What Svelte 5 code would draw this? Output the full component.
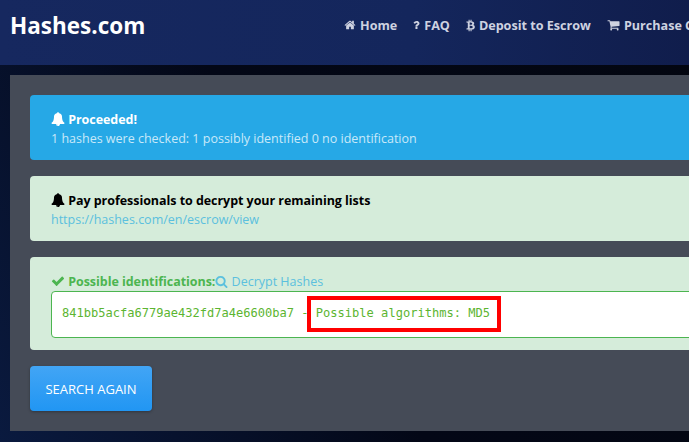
<script lang="ts">
	const paths = {
		home: 'M1472 992v480q0 26-19 45t-45 19h-384v-384h-256v384h-384q-26 0-45-19t-19-45v-480q0-1 .5-3t.5-3l575-474 575 474q1 2 1 6zm223-69l-62 74q-8 9-21 11h-3q-13 0-21-7l-692-577-692 577q-12 8-24 7-13-2-21-11l-62-74q-8-10-7-23.5t11-21.5l719-599q32-26 76-26t76 26l244 204v-195q0-14 9-23t23-9h192q14 0 23 9t9 23v408l219 182q10 8 11 21.5t-7 23.5z',
		question: 'M704 1256v240q0 16-12 28t-28 12h-240q-16 0-28-12t-12-28v-240q0-16 12-28t28-12h240q16 0 28 12t12 28zm316-600q0 54-15.5 101t-35 76.5-55 59.5-57.5 43.5-61 35.5q-41 23-68.5 65t-27.5 67q0 17-12 32.5t-28 15.5h-240q-15 0-25.5-18.5t-10.5-37.5v-45q0-83 65-156.5t143-108.5q59-27 84-56t25-76q0-42-46.5-74t-107.5-32q-65 0-108 29-35 25-107 115-13 16-31 16-12 0-25-8l-164-125q-13-10-15.5-25t5.5-28q160-266 464-266 80 0 161 31t146 83 106 127.5 41 158.5z',
		bitcoin: 'M1167 640q18 182-131 258 117 28 175 103t45 214q-7 71-32.5 125t-64.5 89-97 58.5-121.5 34.5-145.5 20v255h-154v-251q-80 0-122-1v252h-154v-255q-18 0-54-.5t-55-.5h-200l31-183h111q50 0 58-51v-402h16q-6-1-16-1v-287q-13-68-89-68h-111v-164l212 1q64 0 97-1v-252h154v247q82-2 122-2v-245h154v252q79 7 140 22.5t113 45 82.5 78 36.5 114.5zm-215 545q0-36-15-64t-37-46-57.5-30.5-65.5-18.5-74-9-69-3-64.5 1-47.5 1v338q8 0 37 .5t48 .5 53-1.5 58.5-4 57-8.5 55.5-14 47.5-21 39.5-30 24.5-40 9.5-51zm-71-476q0-33-12.5-58.5t-30.5-42-48-28-55-16.5-61.5-8-58-2.5-54 1-39.5.5v307q5 0 34.5.5t46.5 0 50-2 55-5.5 51.5-11 48.5-18.5 37-27 27-38.5 9-51z',
		cart: 'M704 1536q0 52-38 90t-90 38-90-38-38-90 38-90 90-38 90 38 38 90zm896 0q0 52-38 90t-90 38-90-38-38-90 38-90 90-38 90 38 38 90zm128-1088v512q0 24-16.5 42.5t-40.5 21.5l-1044 122q13 60 13 70 0 16-24 64h920q26 0 45 19t19 45-19 45-45 19h-1024q-26 0-45-19t-19-45q0-11 8-31.5t16-36 21.5-40 15.5-29.5l-177-823h-204q-26 0-45-19t-19-45 19-45 45-19h256q16 0 28.5 6.5t19.5 15.5 13 24.5 8 26 5.5 29.5 4.5 26h1201q26 0 45 19t19 45z',
		bell: 'M912 1696q0-16-16-16-59 0-101.5-42.5t-42.5-101.5q0-16-16-16t-16 16q0 73 51.5 124.5t124.5 51.5q16 0 16-16zm816-288q0 52-38 90t-90 38h-448q0 106-75 181t-181 75-181-75-75-181h-448q-52 0-90-38t-38-90q50-42 91-88t85-119.5 74.5-158.5 50-206 19.5-260q0-152 117-282.5t307-158.5q-8-19-8-39 0-40 28-68t68-28 68 28 28 68q0 20-8 39 190 28 307 158.5t117 282.5q0 139 19.5 260t50 206 74.5 158.5 85 119.5 91 88z',
		check: 'M1671 566q0 40-28 68l-724 724-136 136q-28 28-68 28t-68-28l-136-136-362-362q-28-28-28-68t28-68l136-136q28-28 68-28t68 28l294 295 656-657q28-28 68-28t68 28l136 136q28 28 28 68z',
		search: 'M1216 832q0-185-131.5-316.5t-316.5-131.5-316.5 131.5-131.5 316.5 131.5 316.5 316.5 131.5 316.5-131.5 131.5-316.5zm512 832q0 52-38 90t-90 38q-54 0-90-38l-343-342q-179 124-399 124-143 0-273.5-55.5t-225-150-150-225-55.5-273.5 55.5-273.5 150-225 225-150 273.5-55.5 273.5 55.5 225 150 150 225 55.5 273.5q0 220-124 399l343 343q37 37 37 90z'
	};

	const nav = [
		{ icon: paths.home, label: 'Home', w: 12, box: 1792 },
		{ icon: paths.question, label: 'FAQ', w: 7, box: 1100 },
		{ icon: paths.bitcoin, label: 'Deposit to Escrow', w: 9, box: 1280 },
		{ icon: paths.cart, label: 'Purchase Credits', w: 13, box: 1792 }
	];
</script>

{#snippet icon(d: string)}
	<svg class="icon" viewBox="0 0 1792 1792" aria-hidden="true"><path {d} fill="currentColor" /></svg>
{/snippet}

<div class="page">
	<header>
		<a class="brand" href="#top">Hashes.com</a>
		<nav>
			{#each nav as item}
				<a href="#top">
					<svg class="nav-icon" style="width: {item.w}px" viewBox="0 0 {item.box} 1792" aria-hidden="true"><path d={item.icon} fill="currentColor" /></svg>
					{item.label}
				</a>
			{/each}
		</nav>
	</header>

	<main>
		<div class="panel">
			<div class="alert info">
				<div class="heading">{@render icon(paths.bell)} Proceeded!</div>
				<div>1 hashes were checked: 1 possibly identified 0 no identification</div>
			</div>

			<div class="alert success">
				<div class="heading dark">{@render icon(paths.bell)} Pay professionals to decrypt your remaining lists</div>
				<a href="#top">https://hashes.com/en/escrow/view</a>
			</div>

			<div class="alert success result">
				<div class="result-head">
					<strong>{@render icon(paths.check)} Possible identifications:</strong><a href="#top">{@render icon(paths.search)} Decrypt Hashes</a>
				</div>
				<div class="output">
					841bb5acfa6779ae432fd7a4e6600ba7 - Possible algorithms: MD5
					<span class="marker"></span>
				</div>
			</div>

			<button type="button">SEARCH AGAIN</button>
		</div>
	</main>
</div>

<style>
	:global(body) {
		margin: 0;
		overflow: hidden;
	}

	.page {
		width: 689px;
		height: 442px;
		overflow: hidden;
		font-family: 'Open Sans', 'Liberation Sans', sans-serif;
		font-size: 12.5px;
		background: linear-gradient(60deg, #0a1a3f 0%, #030716 45%, #030610 100%);
	}

	header {
		display: flex;
		align-items: flex-start;
		height: 65px;
		background: linear-gradient(90deg, #16285f 0%, #14265c 60%, #101d4c 100%);
	}

	.brand {
		flex: none;
		width: 344px;
		padding: 11px 0 0 10px;
		box-sizing: border-box;
		color: #fff;
		font-size: 22.5px;
		line-height: 30px;
		font-weight: 700;
		text-decoration: none;
	}

	nav {
		display: flex;
		flex: none;
		gap: 16px;
		padding-top: 16px;
		white-space: nowrap;
	}

	nav a {
		display: flex;
		align-items: center;
		gap: 4px;
		height: 18px;
		color: #ced2e0;
		font-size: 12.6px;
		font-weight: 700;
		text-decoration: none;
	}

	.nav-icon {
		height: 14px;
		flex: none;
	}

	main {
		padding: 10px 0 0 10px;
	}

	.panel {
		width: 700px;
		height: 356px;
		padding: 20px;
		box-sizing: border-box;
		background: #454b57;
	}

	.alert {
		width: 700px;
		box-sizing: border-box;
		margin-bottom: 16px;
		padding: 15px 21px 12px;
		border-radius: 4px;
		line-height: 19px;
		height: 65px;
	}

	.info {
		background: #26a8e6;
		color: #c9e9f9;
	}

	.success {
		background: #d5ecda;
	}

	.success a {
		color: #5bc0de;
		text-decoration: none;
	}

	.heading {
		color: #fff;
		font-weight: 700;
		letter-spacing: -0.05px;
	}

	.heading.dark {
		color: #000;
	}

	.icon {
		width: 14px;
		height: 14px;
		vertical-align: -2px;
	}

	.result {
		height: 93px;
		padding-top: 15px;
	}

	.result-head {
		display: flex;
		height: 19px;
		white-space: nowrap;
	}

	.result-head strong {
		color: #4cb550;
		letter-spacing: -0.05px;
	}

	.result-head a .icon {
		width: 13px;
		height: 13px;
	}

	.output {
		position: relative;
		height: 47px;
		padding-left: 10px;
		box-sizing: border-box;
		border: 1px solid #4cb550;
		border-radius: 4px;
		background: #fff;
		color: #5cb531;
		font-family: 'DejaVu Sans Mono', 'Liberation Mono', monospace;
		font-size: 12.05px;
		line-height: 43px;
		white-space: nowrap;
	}

	.marker {
		position: absolute;
		left: 255px;
		top: 4px;
		width: 194px;
		height: 36px;
		box-sizing: border-box;
		border: 4px solid #f00;
	}

	button {
		display: block;
		width: 122px;
		height: 45px;
		padding: 0;
		border: 0;
		border-radius: 4px;
		background: linear-gradient(180deg, #42a5f5, #2196f3);
		box-shadow: 0 1px 3px rgba(0, 0, 0, 0.3);
		color: #fff;
		font-family: inherit;
		font-size: 13px;
	}
</style>
